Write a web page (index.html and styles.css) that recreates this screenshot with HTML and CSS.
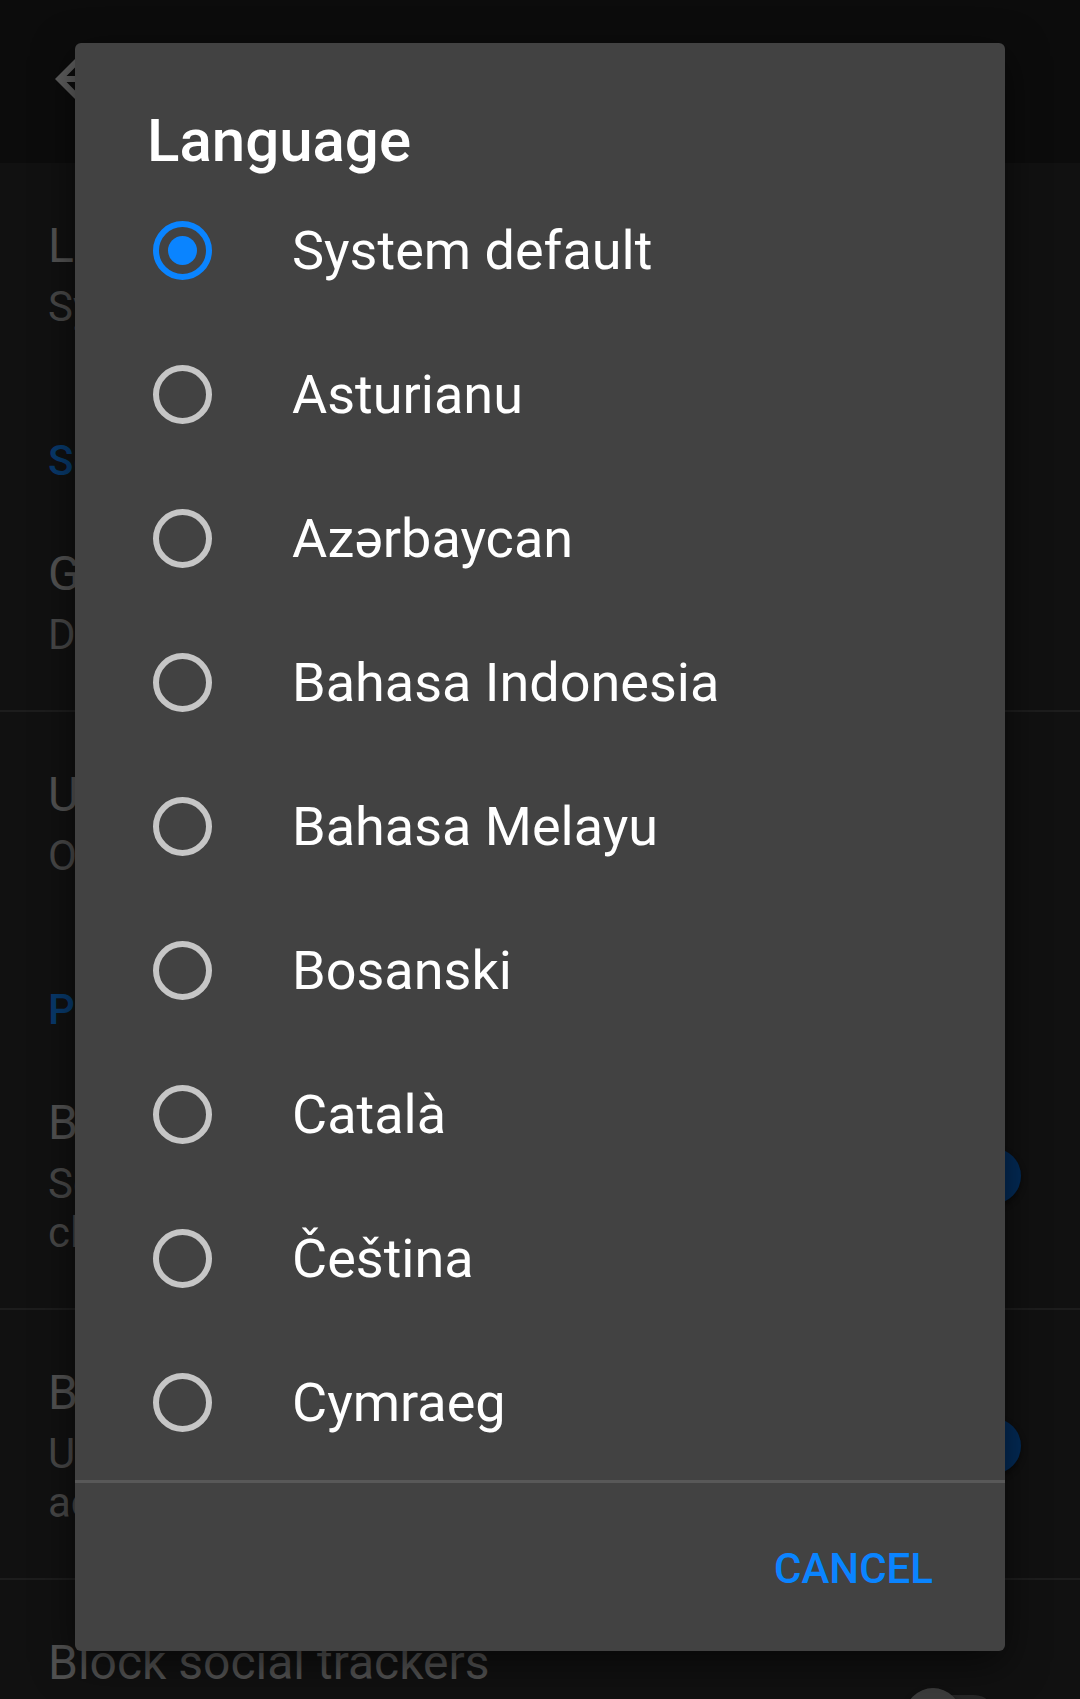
FILE: index.html
```html
<!DOCTYPE html>
<html lang="en">
<head>
<meta charset="utf-8">
<title>Language</title>
<link rel="stylesheet" href="styles.css">
</head>
<body>
<div class="screen">
  <header class="appbar">
    <svg class="back" viewBox="0 0 24 24" width="72" height="72"><path d="M20 11H7.83l5.59-5.59L12 4l-8 8 8 8 1.41-1.41L7.83 13H20v-2z" fill="#5e5e5e"/></svg>
    <span class="appbar-title">Settings</span>
  </header>

  <div class="pref">
    <div class="pref-text">
      <div class="pref-title">Language</div>
      <div class="pref-sub">System default</div>
    </div>
  </div>

  <div class="pref-header">Search</div>

  <div class="pref">
    <div class="pref-text">
      <div class="pref-title">Google</div>
      <div class="pref-sub">Default search engine</div>
    </div>
  </div>
  <div class="rule"></div>

  <div class="pref">
    <div class="pref-text">
      <div class="pref-title">URL Autocomplete</div>
      <div class="pref-sub">On</div>
    </div>
  </div>

  <div class="pref-header">Privacy &amp; Security</div>

  <div class="pref">
    <div class="pref-text">
      <div class="pref-title">Block ad trackers</div>
      <div class="pref-sub">Some ads track site visits, even if you don’t<br>click the ads</div>
    </div>
    <div class="switch on"><span class="track"></span><span class="thumb"></span></div>
  </div>
  <div class="rule"></div>

  <div class="pref">
    <div class="pref-text">
      <div class="pref-title">Block analytic trackers</div>
      <div class="pref-sub">Used to collect, analyze and measure<br>activities like tapping and scrolling</div>
    </div>
    <div class="switch on"><span class="track"></span><span class="thumb"></span></div>
  </div>
  <div class="rule"></div>

  <div class="pref">
    <div class="pref-text">
      <div class="pref-title">Block social trackers</div>
      <div class="pref-sub">Embedded on sites to track your visits and<br>to display functionality like share buttons</div>
    </div>
    <div class="switch off"><span class="track"></span><span class="thumb"></span></div>
  </div>

  <div class="dialog">
    <div class="dialog-title">Language</div>
    <div class="options">
      <div class="option"><span class="radio checked"></span><span class="option-label">System default</span></div>
      <div class="option"><span class="radio"></span><span class="option-label">Asturianu</span></div>
      <div class="option"><span class="radio"></span><span class="option-label">Azərbaycan</span></div>
      <div class="option"><span class="radio"></span><span class="option-label">Bahasa Indonesia</span></div>
      <div class="option"><span class="radio"></span><span class="option-label">Bahasa Melayu</span></div>
      <div class="option"><span class="radio"></span><span class="option-label">Bosanski</span></div>
      <div class="option"><span class="radio"></span><span class="option-label">Català</span></div>
      <div class="option"><span class="radio"></span><span class="option-label">Čeština</span></div>
      <div class="option"><span class="radio"></span><span class="option-label">Cymraeg</span></div>
      <div class="option"><span class="radio"></span><span class="option-label">Dansk</span></div>
    </div>
    <div class="dialog-divider"></div>
    <div class="actions">
      <span class="btn">CANCEL</span>
    </div>
  </div>
</div>
</body>
</html>
```

FILE: styles.css
```css
* { box-sizing: border-box; }

html, body {
  margin: 0;
  padding: 0;
  background: #111111;
}

body {
  font-family: Roboto, "Noto Sans", "Liberation Sans", sans-serif;
}

.screen {
  position: relative;
  width: 1080px;
  height: 1699px;
  overflow: hidden;
  background: #111111;
}

/* ---------- background settings screen (dimmed) ---------- */
.appbar {
  height: 163px;
  background: #0c0c0c;
  display: flex;
  align-items: flex-start;
  padding: 43px 0 0 43px;
}

.back { display: block; flex: none; }

.appbar-title {
  margin-left: 100px;
  margin-top: 10px;
  font-size: 60px;
  font-weight: 500;
  color: #5a5a5a;
}

.pref {
  display: flex;
  align-items: center;
  padding: 55px 59px 51px 48px;
}

.pref-text { flex: 1; min-width: 0; }

.pref-title {
  font-size: 48px;
  line-height: 56px;
  color: #525252;
}

.pref-sub {
  margin-top: 8px;
  font-size: 42px;
  line-height: 49px;
  color: #474747;
}

.pref-header {
  padding: 51px 48px 2px;
  font-size: 42px;
  line-height: 56px;
  font-weight: 500;
  color: #08396b;
}

.rule {
  height: 2px;
  background: #1d1d1d;
}

.switch {
  position: relative;
  flex: none;
  width: 116px;
  height: 56px;
}

.switch .track {
  position: absolute;
  left: 10px;
  right: 26px;
  top: 7px;
  height: 42px;
  border-radius: 21px;
  background: #262626;
}

.switch.on .track { background: #03203f; }

.switch .thumb {
  position: absolute;
  top: 0;
  width: 56px;
  height: 56px;
  border-radius: 50%;
  box-shadow: 0 3px 6px rgba(0, 0, 0, 0.45);
}

.switch.on .thumb { right: 0; background: #032b57; }
.switch.off .thumb { left: 0; background: #3c3c3c; }

/* ---------- dialog ---------- */
.dialog {
  position: absolute;
  left: 75px;
  top: 43px;
  width: 930px;
  height: 1608px;
  background: #424242;
  border-radius: 6px;
  box-shadow: 0 12px 40px rgba(0, 0, 0, 0.55);
  display: flex;
  flex-direction: column;
  overflow: hidden;
}

.dialog-title {
  flex: none;
  padding: 63px 72px 0;
  height: 135px;
  font-size: 60px;
  line-height: 70px;
  font-weight: 500;
  color: #ffffff;
}

.options {
  flex: 1;
  min-height: 0;
  overflow: hidden;
}

.option {
  height: 144px;
  display: flex;
  align-items: center;
  padding-left: 78px;
  gap: 80px;
}

.radio {
  flex: none;
  width: 59px;
  height: 59px;
  border-radius: 50%;
  border: 6px solid #c6c6c6;
  display: flex;
  align-items: center;
  justify-content: center;
}

.radio.checked { border-color: #0a84ff; }

.radio.checked::after {
  content: "";
  width: 29px;
  height: 29px;
  border-radius: 50%;
  background: #0a84ff;
}

.option-label {
  font-size: 54px;
  color: #ffffff;
  white-space: nowrap;
}

.dialog-divider {
  flex: none;
  height: 3px;
  background: #585858;
}

.actions {
  flex: none;
  height: 168px;
  display: flex;
  align-items: center;
  justify-content: flex-end;
  padding: 3px 72px 0 0;
}

.btn {
  font-size: 42px;
  font-weight: 500;
  color: #0a84ff;
}
```
